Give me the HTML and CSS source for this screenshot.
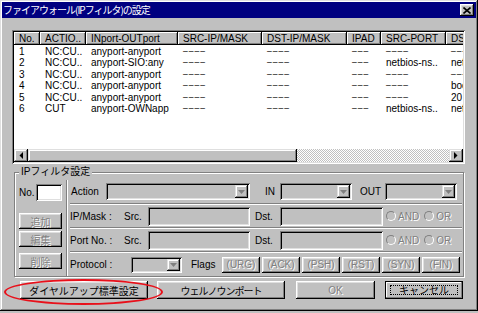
FILE: index.html
```html
<!DOCTYPE html>
<html lang="ja">
<head>
    <meta charset="UTF-8">
    <title>ファイアウォール(IPフィルタ)の設定</title>
    <link rel="stylesheet" href="styles.css">
</head>
<body>
    <div class="window">
        <div class="titlebar">
            <span class="title">ファイアウォール(IPフィルタ)の設定</span>
            <span class="close-btn">
                <svg width="8" height="7" viewBox="0 0 8 7"><path d="M0.5 0.5L7.5 6.5M7.5 0.5L0.5 6.5" stroke="#000" stroke-width="1.6"/></svg>
            </span>
        </div>

        <!-- Filter list -->
        <div class="listview">
            <div class="list-area">
                <table class="filter-table">
                    <colgroup>
                        <col style="width:26px"><col style="width:46px"><col style="width:92px"><col style="width:84px">
                        <col style="width:85px"><col style="width:34px"><col style="width:65px"><col style="width:70px">
                    </colgroup>
                    <thead>
                        <tr><th>No.</th><th>ACTIO..</th><th>INport-OUTport</th><th>SRC-IP/MASK</th><th>DST-IP/MASK</th><th>IPAD</th><th>SRC-PORT</th><th>DST-PORT</th></tr>
                    </thead>
                    <tbody>
                        <tr><td>1</td><td>NC:CU..</td><td>anyport-anyport</td><td class="dash">––––</td><td class="dash">––––</td><td class="dash">–––</td><td class="dash">––––</td><td class="dash">––––</td></tr>
                        <tr><td>2</td><td>NC:CU..</td><td>anyport-SIO:any</td><td class="dash">––––</td><td class="dash">––––</td><td class="dash">–––</td><td>netbios-ns..</td><td>netbios-ns..</td></tr>
                        <tr><td>3</td><td>NC:CU..</td><td>anyport-anyport</td><td class="dash">––––</td><td class="dash">––––</td><td class="dash">–––</td><td class="dash">––––</td><td class="dash">––––</td></tr>
                        <tr><td>4</td><td>NC:CU..</td><td>anyport-anyport</td><td class="dash">––––</td><td class="dash">––––</td><td class="dash">–––</td><td class="dash">––––</td><td>bootps</td></tr>
                        <tr><td>5</td><td>NC:CU..</td><td>anyport-anyport</td><td class="dash">––––</td><td class="dash">––––</td><td class="dash">–––</td><td class="dash">––––</td><td>20</td></tr>
                        <tr><td>6</td><td>CUT</td><td>anyport-OWNapp</td><td class="dash">––––</td><td class="dash">––––</td><td class="dash">–––</td><td>netbios-ns..</td><td>netbios-ns..</td></tr>
                    </tbody>
                </table>
            </div>
            <div class="hscroll">
                <span class="sb-btn"><svg width="4" height="7" viewBox="0 0 4 7"><path d="M4 0V7L0.5 3.5Z" fill="#000"/></svg></span>
                <span class="sb-track"><span class="sb-thumb"></span></span>
                <span class="sb-btn"><svg width="4" height="7" viewBox="0 0 4 7"><path d="M0 0V7L3.5 3.5Z" fill="#000"/></svg></span>
            </div>
        </div>

        <!-- Filter settings -->
        <fieldset class="groupbox">
            <legend>IPフィルタ設定</legend>
            <div class="group-inner">
                <div class="side">
                    <div class="no-row"><span class="lbl-no">No.</span><span class="field field-white field-no"></span></div>
                    <button class="btn side-btn btn-add" disabled>追加</button>
                    <button class="btn side-btn btn-edit" disabled>編集</button>
                    <button class="btn side-btn btn-del" disabled>削除</button>
                </div>
                <div class="panel">
                    <div class="prow">
                        <span class="lbl lbl-action">Action</span>
                        <span class="combo combo-action"><span class="combo-btn"><svg width="7" height="4" viewBox="0 0 7 4"><path d="M0 0H7L3.5 4Z" fill="#808080"/></svg></span></span>
                        <span class="lbl lbl-in">IN</span>
                        <span class="combo combo-small"><span class="combo-btn"><svg width="7" height="4" viewBox="0 0 7 4"><path d="M0 0H7L3.5 4Z" fill="#808080"/></svg></span></span>
                        <span class="lbl lbl-out">OUT</span>
                        <span class="combo combo-small"><span class="combo-btn"><svg width="7" height="4" viewBox="0 0 7 4"><path d="M0 0H7L3.5 4Z" fill="#808080"/></svg></span></span>
                    </div>
                    <div class="prow">
                        <span class="lbl lbl-head">IP/Mask :</span>
                        <span class="lbl lbl-src">Src.</span>
                        <span class="field field-src"></span>
                        <span class="lbl lbl-dst">Dst.</span>
                        <span class="field field-dst"></span>
                        <span class="radios"><span class="radio"></span><span class="off">AND</span><span class="radio"></span><span class="off">OR</span></span>
                    </div>
                    <div class="prow">
                        <span class="lbl lbl-head">Port No. :</span>
                        <span class="lbl lbl-src">Src.</span>
                        <span class="field field-src"></span>
                        <span class="lbl lbl-dst">Dst.</span>
                        <span class="field field-dst"></span>
                        <span class="radios"><span class="radio"></span><span class="off">AND</span><span class="radio"></span><span class="off">OR</span></span>
                    </div>
                    <div class="prow">
                        <span class="lbl lbl-proto">Protocol :</span>
                        <span class="combo combo-proto"><span class="combo-btn"><svg width="7" height="4" viewBox="0 0 7 4"><path d="M0 0H7L3.5 4Z" fill="#808080"/></svg></span></span>
                        <span class="lbl lbl-flags">Flags</span>
                        <span class="flags">
                            <button class="btn flag-btn" disabled>(URG)</button>
                            <button class="btn flag-btn" disabled>(ACK)</button>
                            <button class="btn flag-btn" disabled>(PSH)</button>
                            <button class="btn flag-btn" disabled>(RST)</button>
                            <button class="btn flag-btn" disabled>(SYN)</button>
                            <button class="btn flag-btn" disabled>(FIN)</button>
                        </span>
                    </div>
                </div>
            </div>
        </fieldset>

        <div class="footer">
            <button class="btn foot-btn btn-dialup">ダイヤルアップ標準設定</button>
            <button class="btn foot-btn btn-wk">ウェルノウンポート</button>
            <button class="btn foot-btn btn-ok" disabled>OK</button>
            <button class="btn foot-btn btn-cancel"><span class="focus">キャンセル</span></button>
        </div>

        <!-- red annotation ring -->
        <div class="annotation"></div>
    </div>
</body>
</html>
```

FILE: styles.css
```css
* {
    box-sizing: border-box;
}
body {
    margin: 0;
    background: #c0c0c0;
    font-family: "Liberation Sans", "Noto Sans CJK JP", sans-serif;
    font-size: 10px;
    color: #000;
}
.window {
    position: relative;
    width: 478px;
    height: 311px;
    padding: 2px;
    background: #c0c0c0;
    box-shadow: inset -1px -1px #000, inset 1px 1px #dfdfdf, inset -2px -2px #808080, inset 2px 2px #fff;
}
.titlebar {
    height: 16px;
    background: #000080;
    color: #fff;
    display: flex;
    align-items: center;
    justify-content: space-between;
    padding: 0 2px 0 1px;
}
.title {
    font-family: "Noto Sans CJK JP", sans-serif;
    font-size: 10px;
    letter-spacing: -1px;
    line-height: 16px;
}
.close-btn {
    width: 14px;
    height: 12px;
    background: #c0c0c0;
    display: flex;
    align-items: center;
    justify-content: center;
    box-shadow: inset -1px -1px #000, inset 1px 1px #fff, inset -2px -2px #808080, inset 2px 2px #dfdfdf;
}

/* list */
.listview {
    margin: 12px 0 0 10px;
    width: 453px;
    height: 134px;
    padding: 2px;
    background: #fff;
    display: flex;
    flex-direction: column;
    box-shadow: inset 1px 1px #808080, inset -1px -1px #fff, inset 2px 2px #000, inset -2px -2px #dfdfdf;
}
.list-area {
    flex: 1;
    min-width: 0;
    overflow: hidden;
}
.filter-table {
    border-collapse: collapse;
    table-layout: fixed;
    width: 502px;
}
.filter-table th {
    height: 13px;
    padding: 0 0 0 5px;
    background: #c0c0c0;
    font-weight: normal;
    text-align: left;
    white-space: nowrap;
    overflow: hidden;
    box-shadow: inset -1px -1px #000, inset 1px 1px #fff, inset -2px -2px #808080;
}
.filter-table td {
    height: 11.5px;
    line-height: 11px;
    padding: 0 0 0 5px;
    white-space: nowrap;
    overflow: hidden;
}
.filter-table td.dash {
    font-size: 8.5px;
    letter-spacing: 1px;
}
.filter-table tbody tr:first-child td {
    padding-top: 1px;
}
.hscroll {
    display: flex;
    height: 13px;
}
.sb-btn {
    width: 14px;
    height: 13px;
    background: #c0c0c0;
    display: flex;
    align-items: center;
    justify-content: center;
    box-shadow: inset -1px -1px #000, inset 1px 1px #dfdfdf, inset -2px -2px #808080, inset 2px 2px #fff;
}
.sb-track {
    flex: 1;
    background: repeating-conic-gradient(#c0c0c0 0 25%, #fff 0 50%) 0 0 / 2px 2px;
}
.sb-thumb {
    display: block;
    width: 269px;
    height: 13px;
    background: #c0c0c0;
    box-shadow: inset -1px -1px #000, inset 1px 1px #dfdfdf, inset -2px -2px #808080, inset 2px 2px #fff;
}

/* group box */
.groupbox {
    margin: 2px 0 0 12px;
    width: 450px;
    padding: 0;
    min-inline-size: 0;
    border: 1px solid #808080;
    box-shadow: inset 1px 1px #fff, 1px 1px #fff;
}
.groupbox legend {
    margin-left: 4px;
    padding: 0 2px;
    line-height: 12px;
    background: #c0c0c0;
}
.group-inner {
    display: flex;
    margin-top: 2px;
}
.side {
    width: 51px;
    padding-left: 4px;
    display: flex;
    flex-direction: column;
}
.no-row {
    display: flex;
    align-items: center;
    margin-top: 4px;
}
.lbl-no {
    width: 17px;
}
.field {
    display: block;
    height: 19px;
    background: #c0c0c0;
    box-shadow: inset 1px 1px #808080, inset -1px -1px #fff, inset 2px 2px #000, inset -2px -2px #dfdfdf;
}
.field-white {
    background: #fff;
}
.field-no {
    width: 26px;
    height: 17px;
}

/* buttons */
.btn {
    font: inherit;
    color: #000;
    background: #c0c0c0;
    border: none;
    padding: 0;
    box-shadow: inset -1px -1px #000, inset 1px 1px #fff, inset -2px -2px #808080, inset 2px 2px #dfdfdf;
}
.btn:disabled {
    color: #808080;
    text-shadow: 1px 1px 0 #fff;
}
.side-btn {
    width: 43px;
    height: 16px;
}
.btn-add {
    margin-top: 12px;
}
.btn-edit {
    margin-top: 2px;
}
.btn-del {
    margin-top: 6px;
}

/* right panel */
.panel {
    flex: 1;
    border-left: 1px solid #808080;
    box-shadow: inset 1px 0 #fff;
    padding-left: 3px;
    margin-right: 1px;
}
.prow {
    height: 24px;
    display: flex;
    align-items: center;
}
.prow:not(:last-child) {
    border-bottom: 1px solid #808080;
}
.prow + .prow {
    border-top: 1px solid #fff;
}
.lbl {
    white-space: nowrap;
}
.lbl-action {
    width: 36px;
    padding-left: 1px;
}
.lbl-in {
    width: 15px;
    margin-left: 15px;
}
.lbl-out {
    width: 25px;
    margin-left: 8px;
}
.lbl-head {
    width: 54px;
}
.lbl-src {
    width: 24px;
}
.lbl-dst {
    width: 25px;
    margin-left: 5px;
}
.lbl-proto {
    width: 61px;
}
.lbl-flags {
    width: 31px;
    margin-left: 9px;
}
.combo {
    height: 17px;
    padding: 2px;
    background: #c0c0c0;
    display: flex;
    justify-content: flex-end;
    box-shadow: inset 1px 1px #808080, inset -1px -1px #fff, inset 2px 2px #000, inset -2px -2px #dfdfdf;
}
.combo-action {
    width: 144px;
}
.combo-small {
    width: 72px;
}
.combo-proto {
    width: 51px;
    height: 16px;
}
.combo-btn {
    width: 13px;
    display: flex;
    align-items: center;
    justify-content: center;
    box-shadow: inset -1px -1px #000, inset 1px 1px #dfdfdf, inset -2px -2px #808080, inset 2px 2px #fff;
}
.field-src {
    width: 102px;
}
.field-dst {
    width: 103px;
}
.radios {
    display: flex;
    align-items: center;
    margin-left: 3px;
}
.radio {
    width: 10px;
    height: 10px;
    border-radius: 50%;
    border: 1px solid;
    border-color: #808080 #fff #fff #808080;
    background: #c0c0c0;
    margin-right: 2px;
}
.off {
    color: #808080;
    text-shadow: 1px 1px 0 #fff;
    margin-right: 5px;
}
.flags {
    display: flex;
    gap: 2px;
}
.flag-btn {
    width: 38px;
    height: 16px;
}

/* footer */
.footer {
    display: flex;
    margin: 4px 0 0 18px;
}
.foot-btn {
    height: 18px;
}
.btn-dialup {
    width: 128px;
}
.btn-wk {
    width: 128px;
    margin-left: 9px;
    letter-spacing: -1px;
}
.btn-ok {
    width: 79px;
    margin-left: 11px;
}
.btn-cancel {
    width: 78px;
    margin-left: 10px;
    padding: 3px 4px;
    border: 1px solid #000;
    box-shadow: inset -1px -1px #808080, inset 1px 1px #fff;
}
.focus {
    display: block;
    height: 100%;
    line-height: 9px;
    border: 1px dotted #000;
}
.annotation {
    position: absolute;
    left: 4px;
    top: 279px;
    width: 159px;
    height: 26px;
    border: 2px solid #e8101a;
    border-radius: 50%;
}
```
